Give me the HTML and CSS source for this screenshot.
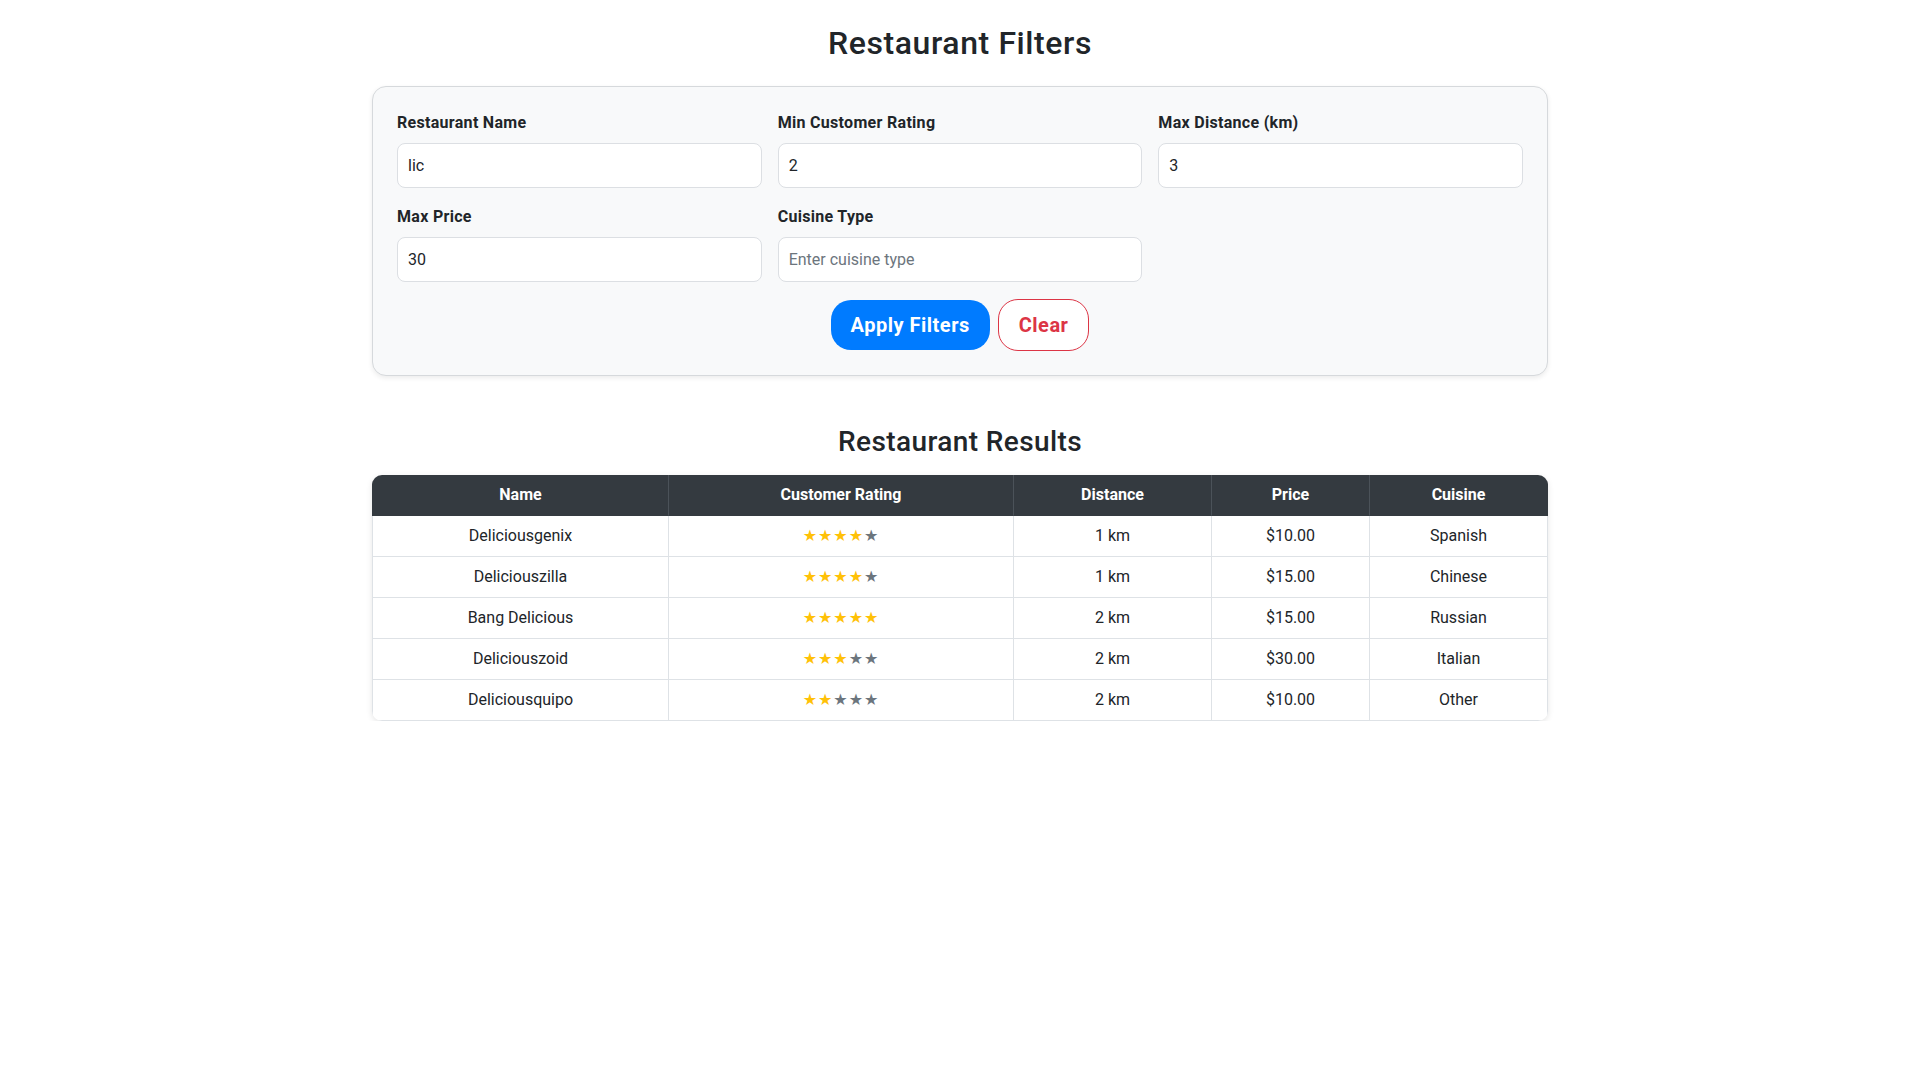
FILE: index.html
```html
<!DOCTYPE html>
<html lang="en">
<head>
<meta charset="utf-8">
<title>Restaurant Filters</title>
<link rel="stylesheet" href="styles.css">
</head>
<body>
<div class="container">
  <h2 class="page-title">Restaurant Filters</h2>
  <form class="filter-card">
    <div class="filter-grid">
      <div class="field">
        <label class="field-label" for="name">Restaurant Name</label>
        <input class="field-input" id="name" type="text" value="lic">
      </div>
      <div class="field">
        <label class="field-label" for="rating">Min Customer Rating</label>
        <input class="field-input" id="rating" type="text" value="2">
      </div>
      <div class="field">
        <label class="field-label" for="distance">Max Distance (km)</label>
        <input class="field-input" id="distance" type="text" value="3">
      </div>
      <div class="field">
        <label class="field-label" for="price">Max Price</label>
        <input class="field-input" id="price" type="text" value="30">
      </div>
      <div class="field">
        <label class="field-label" for="cuisine">Cuisine Type</label>
        <input class="field-input" id="cuisine" type="text" placeholder="Enter cuisine type">
      </div>
    </div>
    <div class="actions">
      <button type="button" class="btn btn-apply">Apply Filters</button>
      <button type="button" class="btn btn-clear">Clear</button>
    </div>
  </form>

  <h3 class="section-title">Restaurant Results</h3>
  <div class="table-wrap">
    <table class="results">
      <colgroup>
        <col class="c-name">
        <col class="c-rating">
        <col class="c-distance">
        <col class="c-price">
        <col class="c-cuisine">
      </colgroup>
      <thead>
        <tr><th>Name</th><th>Customer Rating</th><th>Distance</th><th>Price</th><th>Cuisine</th></tr>
      </thead>
      <tbody>
        <tr><td>Deliciousgenix</td><td><span class="stars"><span class="on">★★★★</span><span class="off">★</span></span></td><td>1 km</td><td>$10.00</td><td>Spanish</td></tr>
        <tr><td>Deliciouszilla</td><td><span class="stars"><span class="on">★★★★</span><span class="off">★</span></span></td><td>1 km</td><td>$15.00</td><td>Chinese</td></tr>
        <tr><td>Bang Delicious</td><td><span class="stars"><span class="on">★★★★★</span></span></td><td>2 km</td><td>$15.00</td><td>Russian</td></tr>
        <tr><td>Deliciouszoid</td><td><span class="stars"><span class="on">★★★</span><span class="off">★★</span></span></td><td>2 km</td><td>$30.00</td><td>Italian</td></tr>
        <tr><td>Deliciousquipo</td><td><span class="stars"><span class="on">★★</span><span class="off">★★★</span></span></td><td>2 km</td><td>$10.00</td><td>Other</td></tr>
      </tbody>
    </table>
  </div>
</div>
</body>
</html>
```

FILE: styles.css
```css
* { box-sizing: border-box; }

html, body {
  margin: 0;
  padding: 0;
  background: #ffffff;
}

body {
  font-family: Roboto, "Liberation Sans", Arial, sans-serif;
  font-size: 16px;
  line-height: 24px;
  color: #212529;
}

.container {
  width: 1176px;
  margin: 0 auto;
  padding-top: 24px;
}

.page-title,
.section-title {
  margin: 0;
  line-height: 1.2;
  font-weight: 500;
  text-align: center;
  color: #212529;
}

.page-title {
  font-size: 32px;
  letter-spacing: 0.6px;
  margin-bottom: 24px;
}

.section-title {
  font-size: 28px;
  letter-spacing: 0.4px;
  margin-top: 49px;
  margin-bottom: 16px;
}

.filter-card {
  margin: 0;
  background: #f8f9fa;
  border: 1px solid #d6d9dc;
  border-radius: 14px;
  padding: 24px;
  box-shadow: 0 2px 5px rgba(0, 0, 0, 0.08);
}

.filter-grid {
  display: grid;
  grid-template-columns: repeat(3, 1fr);
  column-gap: 16px;
  row-gap: 17px;
}

.field {
  display: flex;
  flex-direction: column;
}

.field-label {
  font-weight: 700;
  font-size: 16px;
  line-height: 24px;
  letter-spacing: 0.3px;
  margin-bottom: 8px;
}

.field-input {
  height: 45px;
  padding: 10px 10px;
  font-family: inherit;
  font-size: 16px;
  line-height: 24px;
  color: #212529;
  background: #ffffff;
  border: 1px solid #dcdfe3;
  border-radius: 8px;
  outline: none;
}

.field-input::placeholder {
  color: #6c757d;
  opacity: 1;
}

.actions {
  display: flex;
  justify-content: center;
  align-items: center;
  gap: 8px;
  margin-top: 17px;
}

.btn {
  font-family: inherit;
  font-size: 20px;
  line-height: 26px;
  font-weight: 700;
  letter-spacing: 0.5px;
  padding: 12px 20px;
  border-radius: 20px;
  cursor: pointer;
}

.btn-apply {
  background: #007bff;
  color: #ffffff;
  border: 0;
}

.btn-clear {
  background: #ffffff;
  color: #dc3545;
  border: 1px solid #dc3545;
}

.table-wrap {
  border-radius: 10px;
  overflow: hidden;
  box-shadow: 0 2px 6px rgba(0, 0, 0, 0.1);
}

.results {
  width: 100%;
  border-collapse: separate;
  border-spacing: 0;
  table-layout: fixed;
}

.c-name { width: 297px; }
.c-rating { width: 345px; }
.c-distance { width: 198px; }
.c-price { width: 158px; }
.c-cuisine { width: 178px; }

.results th,
.results td {
  padding: 8px 12px;
  line-height: 24px;
  text-align: center;
  border-bottom: 1px solid #dee2e6;
  border-right: 1px solid #dee2e6;
}

.results th {
  background: #343a40;
  color: #ffffff;
  font-weight: 700;
  border-bottom-color: #343a40;
  border-right-color: #4b5259;
}

.results th:last-child { border-right-color: #343a40; }

.results td:first-child { border-left: 1px solid #dee2e6; }
.results th:first-child { border-left: 1px solid #343a40; }

.stars {
  font-family: "DejaVu Sans", sans-serif;
  font-size: 16px;
  letter-spacing: 1px;
}

.stars .on { color: #ffc107; }
.stars .off { color: #6c757d; }
```
